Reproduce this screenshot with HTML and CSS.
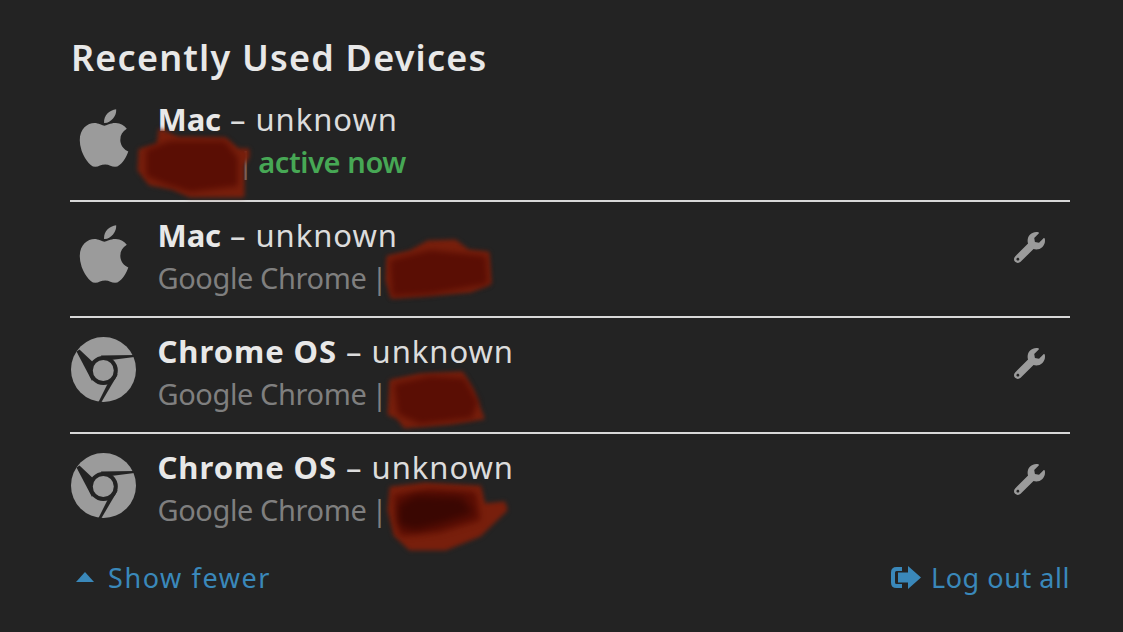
FILE: index.html
```html
<!DOCTYPE html>
<html lang="en">
<head>
<meta charset="utf-8">
<title>Recently Used Devices</title>
<link rel="stylesheet" href="styles.css">
</head>
<body>
<svg width="0" height="0" class="defs">
  <defs>
    <symbol id="apple" viewBox="0 0 384 512"><path d="M318.7 268.7c-.2-36.7 16.4-64.4 50-84.8-18.8-26.9-47.2-41.7-84.7-44.6-35.5-2.8-74.3 20.7-88.5 20.7-15 0-49.4-19.7-76.4-19.7C63.3 141.2 4 184.8 4 273.5q0 39.3 14.4 81.2c12.8 36.7 59 126.7 107.2 125.2 25.2-.6 43-17.9 75.8-17.9 31.8 0 48.3 17.9 76.4 17.9 48.6-.7 90.4-82.5 102.6-119.3-65.2-30.7-61.7-90-61.7-91.9zm-56.6-164.2c27.3-32.4 24.8-61.9 24-72.5-24.1 1.4-52 16.4-67.9 34.9-17.5 19.8-27.8 44.3-25.6 71.9 26.1 2 49.9-11.4 69.5-34.3z"/></symbol>
    <symbol id="chrome" viewBox="0 0 65 65">
      <circle cx="32.5" cy="32.5" r="32.5" fill="#9b9b9b"/>
      <g fill="#232323">
        <path d="M63.5 18 L30 18.5 L32 24 L63.5 20Z"/>
        <path d="M8.5 12.5 L5.5 14.5 L21 44 L27 30Z"/>
        <path d="M30.5 65 L27.5 65 L38 44 L47 37Z"/>
      </g>
      <circle cx="32.3" cy="33.5" r="12.5" fill="#9b9b9b" stroke="#232323" stroke-width="4"/>
    </symbol>
    <symbol id="wrench" viewBox="0 0 512 512"><path d="M507.73 109.1c-2.24-9.03-13.54-12.09-20.12-5.51l-74.36 74.36-67.88-11.31-11.31-67.88 74.36-74.36c6.62-6.62 3.43-17.9-5.66-20.16-47.38-11.74-99.55.91-136.58 37.93-39.64 39.64-50.55 97.1-34.05 147.2L18.74 402.76c-24.99 24.99-24.99 65.51 0 90.5 24.99 24.99 65.51 24.99 90.5 0l213.21-213.21c50.12 16.71 107.47 5.68 147.37-34.22 37.07-37.07 49.7-89.32 37.91-136.73zM64 472c-13.25 0-24-10.75-24-24 0-13.26 10.75-24 24-24s24 10.74 24 24c0 13.25-10.75 24-24 24z"/></symbol>
  </defs>
</svg>

<main class="panel">
  <h1 class="title">Recently Used Devices</h1>
  <ul class="devices">
    <li class="device">
      <div class="device-icon"><svg class="icon-apple"><use href="#apple"/></svg></div>
      <div class="device-text">
        <div class="name"><strong class="short">Mac</strong> – unknown</div>
        <div class="sub"><span class="spacer"></span><span class="pipe">|</span> <span class="active">active now</span></div>
      </div>
    </li>
    <li class="device">
      <div class="device-icon"><svg class="icon-apple"><use href="#apple"/></svg></div>
      <div class="device-text">
        <div class="name"><strong class="short">Mac</strong> – unknown</div>
        <div class="sub">Google Chrome <span class="pipe">|</span></div>
      </div>
      <svg class="icon-wrench"><use href="#wrench"/></svg>
    </li>
    <li class="device">
      <div class="device-icon"><svg class="icon-chrome"><use href="#chrome"/></svg></div>
      <div class="device-text">
        <div class="name"><strong>Chrome OS</strong> – unknown</div>
        <div class="sub">Google Chrome <span class="pipe">|</span></div>
      </div>
      <svg class="icon-wrench"><use href="#wrench"/></svg>
    </li>
    <li class="device">
      <div class="device-icon"><svg class="icon-chrome"><use href="#chrome"/></svg></div>
      <div class="device-text">
        <div class="name"><strong>Chrome OS</strong> – unknown</div>
        <div class="sub">Google Chrome <span class="pipe">|</span></div>
      </div>
      <svg class="icon-wrench"><use href="#wrench"/></svg>
    </li>
  </ul>
  <div class="actions">
    <a class="action action-toggle"><svg class="icon-caret" viewBox="0 0 18 10"><path d="M9 0 L18 10 L0 10Z"/></svg>Show fewer</a>
    <a class="action action-logout"><svg class="icon-logout" viewBox="0 0 30 23"><path class="bracket" d="M11 3 H5.5 Q2 3 2 6.5 V16.5 Q2 20 5.5 20 H11"/><path d="M17 0 L30 11.5 L17 23 V16.5 H7 V6.5 H17Z"/></svg>Log out all</a>
  </div>
</main>

<svg class="scribbles" viewBox="0 0 1123 632" aria-hidden="true">
  <g class="outer">
    <path d="M160 130 L178 138 L225 139 L238 150 L248 150 L248 157 L243 165 L243 196 L190 196 L172 188 L150 184 L139 170 L140 150 L158 145Z"/>
    <path d="M388 257 L410 252 L428 242 L455 241 L468 251 L488 253 L490 283 L470 291 L420 295 L392 297 L387 280Z"/>
    <path d="M391 381 L420 375 L462 373 L472 390 L483 418 L450 423 L405 427 L398 418 L389 414Z"/>
    <path d="M391 488 L425 484 L480 487 L484 505 L504 503 L506 510 L480 535 L445 549 L410 549 L395 535 L389 510Z"/>
  </g>
  <g class="inner">
    <path d="M146 150 L170 141 L225 141 L238 158 L238 186 L190 192 L165 184 L146 176Z"/>
    <path d="M390 260 L430 250 L486 256 L488 284 L430 294 L392 296Z"/>
    <path d="M394 384 L430 376 L464 378 L478 402 L472 418 L420 424 L398 414Z"/>
    <path d="M394 495 L430 489 L476 492 L480 520 L440 532 L400 536Z"/>
  </g>
  <path class="darkest" d="M398 505 L415 495 L462 497 L474 513 L440 524 L415 530 L398 525Z"/>
</svg>
</body>
</html>
```
FILE: styles.css
```css
* { box-sizing: border-box; }
html, body { margin: 0; height: 632px; overflow: hidden; }
body {
  background: #232323;
  color: #e6e6e6;
  font-family: "Noto Sans", "Lato", sans-serif;
  position: relative;
}
.defs { position: absolute; }
.panel { padding: 36px 53px 0 70px; }
.title {
  margin: 0 0 0 1px;
  font-size: 36px;
  line-height: 44px;
  font-weight: 600;
  letter-spacing: 1.2px;
  color: #e8e8e8;
}
.devices { list-style: none; margin: 6px 0 0; padding: 0; }
.device {
  display: flex;
  height: 116px;
  border-bottom: 2px solid #d8d8d8;
  align-items: flex-start;
}
.device:last-child { border-bottom: 0; height: 110px; }
.device-icon {
  width: 87.5px;
  flex: none;
  display: flex;
  align-items: center;
  padding-top: 19px;
}
.icon-apple { width: 50px; height: 66px; fill: #9b9b9b; margin-left: 8.5px; }
.icon-chrome { width: 65px; height: 65px; margin-left: 1px; }
.device-text { flex: 1; padding-top: 12px; }
.name, .sub { line-height: 43px; white-space: nowrap; }
.name { font-size: 31px; letter-spacing: 0.95px; color: #dcdcdc; }
.name strong { font-weight: 700; color: #e8e8e8; }
.name .short { letter-spacing: -0.1px; }
.sub { font-size: 29px; letter-spacing: -0.4px; color: #7f7f7f; margin-top: -1px; }
.spacer { display: inline-block; width: 82px; }
.pipe { margin-left: -2px; }
.active { color: #47a855; font-weight: 600; margin-left: -2px; }
.icon-wrench { width: 31px; height: 31px; fill: #9b9b9b; margin: 30px 25px 0 0; flex: none; }
.actions {
  display: flex;
  justify-content: space-between;
  align-items: center;
  height: 40px;
  margin-top: 13px;
  padding-left: 6px;
  font-size: 27px;
}
.action { display: flex; align-items: center; color: #3a88ba; }
.action-toggle { letter-spacing: 1.6px; }
.action-logout { letter-spacing: 0.55px; }
.icon-caret { width: 18px; height: 10px; fill: #3a88ba; margin-right: 14px; }
.icon-logout { width: 30px; height: 23px; fill: #3a88ba; margin-right: 10px; }
.bracket { fill: none; stroke: #3a88ba; stroke-width: 4; }
.scribbles { position: absolute; left: 0; top: 0; width: 1123px; height: 632px; pointer-events: none; }
.outer { fill: #781f0c; stroke: #781f0c; stroke-width: 3; stroke-linejoin: round; filter: blur(2px); }
.inner { fill: #5a0e04; filter: blur(3px); }
.darkest { fill: #3a0702; filter: blur(4px); }
```
